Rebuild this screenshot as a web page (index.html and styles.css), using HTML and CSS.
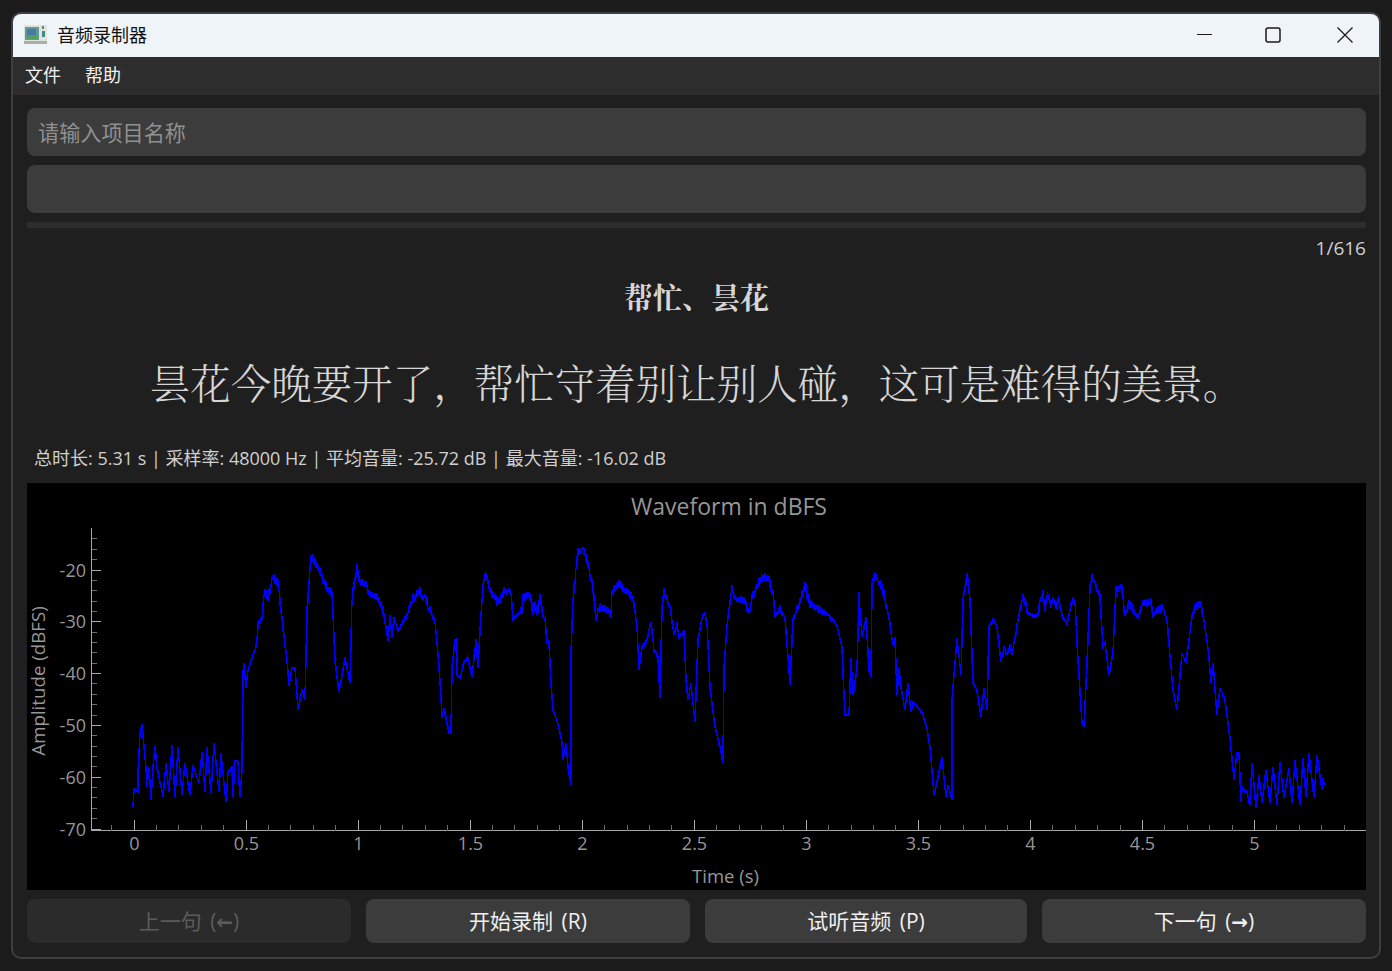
FILE: index.html
```html
<!DOCTYPE html>
<html lang="zh-CN">
<head>
  <meta charset="UTF-8">
  <meta name="viewport" content="width=device-width, initial-scale=1.0">
  <title>音频录制器</title>
  <link rel="stylesheet" href="styles.css">
</head>
<body>
  <div class="window">
    <header class="titlebar">
      <svg class="app-icon" width="24" height="22" viewBox="0 0 24 22">
        <rect x="0" y="1" width="23" height="19" fill="#dfe3dc"/>
        <rect x="1" y="3" width="14" height="13" fill="#5f9a94"/>
        <rect x="3" y="5" width="9" height="8" fill="#4a78a8"/>
        <rect x="4" y="11" width="9" height="4" fill="#55a060"/>
        <rect x="18" y="2" width="2" height="3" fill="#6c7f80"/>
        <rect x="18" y="7" width="3" height="6" fill="#3d8a86"/>
        <rect x="0" y="17" width="23" height="3" fill="#a9aea6"/>
      </svg>
      <span class="app-name">音频录制器</span>
      <div class="caption-buttons">
        <svg width="16" height="16" viewBox="0 0 16 16"><path d="M0 7.5H15" fill="none" stroke="#1a1a1a"/></svg>
        <svg width="16" height="16" viewBox="0 0 16 16"><rect x="1" y="1" width="14" height="14" rx="2" fill="none" stroke="#1a1a1a" stroke-width="1.5"/></svg>
        <svg width="16" height="16" viewBox="0 0 16 16"><path d="M.5 .5L15.5 15.5M15.5 .5L.5 15.5" fill="none" stroke="#1a1a1a" stroke-width="1.3"/></svg>
      </div>
    </header>

    <nav class="menubar">
      <span>文件</span>
      <span>帮助</span>
    </nav>

    <main class="content">
      <input class="field" type="text" placeholder="请输入项目名称">
      <div class="field"></div>
      <div class="progress"></div>
      <div class="counter">1/616</div>
      <div class="keywords">帮忙、昙花</div>
      <div class="sentence">昙花今晚要开了，帮忙守着别让别人碰，这可是难得的美景。</div>
      <div class="stats">总时长: 5.31 s | 采样率: 48000 Hz | 平均音量: -25.72 dB | 最大音量: -16.02 dB</div>

      <div class="plot">
        <svg id="chart" width="1339" height="407" viewBox="27 483 1339 407"></svg>
      </div>

      <div class="actions">
        <button disabled>上一句 (<span class="arrow">←</span>)</button>
        <button>开始录制 (R)</button>
        <button>试听音频 (P)</button>
        <button>下一句 (<span class="arrow">→</span>)</button>
      </div>
    </main>
  </div>

  <script src="chart.js"></script>
</body>
</html>
```

FILE: styles.css
```css
* {
  box-sizing: border-box;
}
body {
  margin: 0;
  padding: 12px 11px;
  background-color: #1b1b1b;
  font-family: "Open Sans", "Noto Sans CJK SC", sans-serif;
  color: #d8d8d8;
}
.window {
  height: 947px;
  display: flex;
  flex-direction: column;
  background-color: #1f1f1f;
  border: 2px solid #3e3e3e;
  border-radius: 10px;
  overflow: hidden;
}
.titlebar {
  height: 43px;
  flex: none;
  display: flex;
  align-items: center;
  padding-left: 11px;
  padding-bottom: 2px;
  background-color: #eff4f9;
  color: #111;
}
.app-icon {
  margin-right: 9px;
}
.app-name {
  margin-bottom: 2px;
  font-family: "Noto Sans CJK SC", sans-serif;
  font-size: 18px;
}
.caption-buttons {
  margin-left: auto;
  margin-right: 26px;
  display: flex;
}
.caption-buttons svg:nth-child(1) {
  margin-right: 52px;
}
.caption-buttons svg:nth-child(2) {
  margin-right: 56px;
}
.menubar {
  height: 38px;
  flex: none;
  display: flex;
  align-items: center;
  gap: 24px;
  padding-left: 12px;
  padding-bottom: 4px;
  background-color: #2d2d2d;
  color: #f2f2f2;
  font-family: "Noto Sans CJK SC", sans-serif;
  font-size: 18px;
}
.content {
  flex: 1;
  display: flex;
  flex-direction: column;
  padding: 13px 13px 14px 14px;
}
.field {
  height: 48px;
  flex: none;
  width: 100%;
  margin-bottom: 9px;
  padding: 0 11px 2px;
  border: none;
  border-radius: 8px;
  background-color: #3c3c3c;
  font-family: "Noto Sans CJK SC", sans-serif;
  font-size: 21.15px;
  color: #ddd;
}
.field::placeholder {
  color: #909090;
  opacity: 1;
}
.progress {
  height: 6px;
  flex: none;
  background-color: #2d2d2d;
}
.counter {
  height: 40px;
  flex: none;
  line-height: 40px;
  text-align: right;
  font-size: 19px;
  color: #d0d0d0;
}
.keywords {
  height: 58px;
  flex: none;
  line-height: 58px;
  text-align: center;
  font-family: "Noto Serif CJK SC", "Noto Sans CJK SC", serif;
  font-size: 29px;
  font-weight: bold;
  color: #d6d6d6;
}
.sentence {
  height: 112px;
  flex: none;
  line-height: 112px;
  text-align: center;
  font-family: "Noto Serif CJK SC", "Noto Sans CJK SC", serif;
  font-size: 40.5px;
  font-weight: 300;
  color: #d6d6d6;
}
.stats {
  height: 45px;
  flex: none;
  line-height: 40px;
  padding-left: 7px;
  white-space: nowrap;
  font-size: 18px;
  color: #d0d0d0;
}
.plot {
  height: 407px;
  flex: none;
  background-color: #000;
}
#chart {
  display: block;
  overflow: visible;
}
#chart text {
  font-family: "Open Sans", sans-serif;
  fill: #969696;
}
.actions {
  margin-top: 9px;
  height: 44px;
  flex: none;
  display: grid;
  grid-template-columns: 324px 324px 322px 324px;
  gap: 15px;
}
button {
  padding: 0 0 3px;
  border: none;
  border-radius: 8px;
  background-color: #3c3c3c;
  color: #f0f0f0;
  font-family: "Open Sans", "Noto Sans CJK SC", sans-serif;
  font-size: 21px;
  word-spacing: 3px;
  cursor: pointer;
}
button:disabled {
  background-color: #2b2b2b;
  color: #5c5c5c;
}
.arrow {
  font-family: "DejaVu Sans", sans-serif;
  font-size: 20px;
  line-height: 1;
  font-weight: bold;
}
```

FILE: chart.js
```js
const svgNS = 'http://www.w3.org/2000/svg';
const chart = document.getElementById('chart');

function add(tag, attrs, text) {
  const el = document.createElementNS(svgNS, tag);
  for (const key in attrs) el.setAttribute(key, attrs[key]);
  if (text) el.textContent = text;
  chart.appendChild(el);
  return el;
}

function line(x1, y1, x2, y2, color) {
  add('line', { x1, y1, x2, y2, stroke: color, 'stroke-width': 1, 'shape-rendering': 'crispEdges' });
}

// axes
const axisX = 91.5, axisY = 830.5;
const major = '#a8a8a8', minor = '#6e6e6e';
line(axisX, 528, axisX, 831, major);
line(axisX, axisY, 1366, axisY, major);

// y ticks, every 2 dB
for (let db = -70; db <= -14; db += 2) {
  const y = Math.round(569.5 + (-20 - db) * 5.18) + 0.5;
  const big = db % 10 === 0;
  if (big || db > -70) line(axisX, y, big ? 101 : 97, y, big ? major : minor);
  if (big) add('text', { x: 86, y: y + 6, 'text-anchor': 'end', 'font-size': 18 }, String(db));
}

// x ticks, every 0.1 s
for (let i = -1; i <= 54; i++) {
  const x = Math.round(133.5 + i * 22.41) + 0.5;
  const big = i % 5 === 0 && i >= 0;
  line(x, big ? 820 : 825, x, axisY, big ? major : minor);
  if (big) add('text', { x, y: 850, 'text-anchor': 'middle', 'font-size': 18 }, String(i / 10));
}

// titles
add('text', { x: 729, y: 515, 'text-anchor': 'middle', 'font-size': 23 }, 'Waveform in dBFS');
add('text', { x: 725.5, y: 883, 'text-anchor': 'middle', 'font-size': 18.5 }, 'Time (s)');
add('text', { x: 0, y: 0, 'text-anchor': 'middle', 'font-size': 18.7, transform: 'translate(44.5 681) rotate(-90)' }, 'Amplitude (dBFS)');

// waveform outline, traced in page pixels
const trace = [
  [133,807],[134,788],[138,792],[138,773],[140,733],[142,724],[144,747],[146,767],[147,787],[149,767],
  [151,800],[153,767],[155,746],[157,767],[163,797],[166,763],[169,792],[172,745],[175,797],[178,747],
  [182,795],[185,763],[190,795],[193,765],[199,783],[202,752],[205,792],[207,747],[211,793],[214,743],
  [219,792],[221,753],[226,802],[228,772],[232,767],[233,797],[235,760],[238,762],[240,797],[242,770],
  [243,673],[244,663],[246,688],[248,670],[257,643],[258,623],[262,620],[265,587],[268,598],[273,578],
  [278,583],[283,627],[287,660],[289,686],[292,668],[295,668],[298,710],[302,690],[305,700],[307,613],
  [311,555],[317,565],[328,590],[332,593],[335,660],[339,692],[345,658],[350,683],[352,597],[357,568],
  [360,583],[366,583],[368,595],[377,595],[383,610],[386,627],[388,642],[390,615],[392,638],[394,618],
  [398,632],[407,615],[413,598],[420,592],[427,603],[435,622],[438,653],[441,697],[442,718],[444,708],
  [449,733],[451,733],[452,667],[455,640],[457,640],[457,675],[460,678],[464,662],[468,658],[472,677],
  [476,640],[478,668],[481,613],[483,587],[486,573],[491,592],[497,603],[505,590],[511,593],[513,620],
  [522,610],[523,598],[527,594],[531,597],[533,615],[535,600],[537,615],[540,598],[543,617],[545,618],
  [547,643],[549,643],[551,683],[553,710],[557,720],[562,742],[563,760],[566,743],[568,767],[571,785],
  [571,653],[573,600],[576,570],[578,552],[584,550],[590,572],[594,593],[596,622],[598,608],[608,610],
  [611,618],[612,593],[619,583],[633,598],[637,627],[639,670],[642,647],[647,640],[651,622],[654,650],
  [658,657],[660,698],[662,607],[664,590],[670,607],[674,635],[677,623],[679,638],[684,630],[686,680],
  [688,700],[691,683],[695,722],[698,640],[702,618],[705,613],[707,623],[710,687],[715,727],[720,747],
  [723,763],[724,667],[727,627],[730,600],[732,588],[735,600],[745,600],[749,613],[752,597],[757,585],
  [763,577],[768,578],[773,592],[775,617],[780,608],[785,618],[788,657],[790,685],[793,620],[798,608],
  [805,585],[810,605],[827,613],[837,625],[842,647],[843,673],[845,715],[849,715],[851,658],[853,695],
  [857,670],[859,595],[862,637],[866,618],[869,670],[871,677],[872,583],[874,575],[883,590],[890,623],
  [893,645],[895,637],[897,695],[899,668],[901,687],[905,710],[908,683],[911,712],[913,702],[922,712],
  [927,728],[930,747],[934,795],[938,777],[942,757],[946,797],[948,785],[952,800],[952,700],[955,663],
  [957,638],[961,675],[963,600],[967,575],[970,600],[973,683],[977,690],[981,717],[984,688],[987,710],
  [989,627],[993,619],[997,627],[1001,662],[1004,647],[1007,655],[1010,645],[1012,655],[1018,620],[1023,597],
  [1028,613],[1037,617],[1043,592],[1045,608],[1048,593],[1051,607],[1053,597],[1057,608],[1058,597],[1062,615],
  [1067,625],[1072,600],[1075,603],[1078,660],[1082,723],[1084,727],[1087,663],[1090,587],[1092,578],[1100,595],
  [1103,648],[1105,642],[1109,675],[1113,653],[1116,590],[1122,588],[1125,615],[1129,603],[1138,618],[1143,602],
  [1151,603],[1153,618],[1156,611],[1163,608],[1167,620],[1173,690],[1177,710],[1182,653],[1186,662],[1192,617],
  [1195,607],[1201,603],[1205,628],[1208,648],[1211,683],[1213,663],[1217,715],[1220,688],[1225,700],[1230,738],
  [1234,780],[1237,753],[1239,753],[1241,802],[1242,788],[1247,792],[1250,805],[1252,763],[1256,808],[1259,775],
  [1262,803],[1266,770],[1270,803],[1273,767],[1277,805],[1280,762],[1284,798],[1289,768],[1292,803],[1295,760],
  [1300,805],[1303,758],[1306,797],[1309,753],[1314,798],[1317,755],[1322,790],[1323,778],[1325,788]
];

// small repeatable noise, stronger on the loud plateaus
let seed = 7;
function noise() {
  seed = (seed * 16807) % 2147483647;
  return seed / 2147483647 - 0.5;
}

const points = [];
for (let i = 0; i < trace.length - 1; i++) {
  const [x0, y0] = trace[i];
  const [x1, y1] = trace[i + 1];
  const steps = Math.max(1, Math.round((x1 - x0) * 3));
  for (let s = 0; s < steps; s++) {
    const t = s / steps;
    const y = y0 + (y1 - y0) * t;
    const amp = y < 612 ? 9 : y < 660 ? 3 : 1;
    points.push((x0 + (x1 - x0) * t).toFixed(1) + ',' + Math.round(y + noise() * amp));
  }
}
add('polyline', {
  points: points.join(' '),
  fill: 'none',
  stroke: '#0000ff',
  'stroke-width': 1.5,
  'shape-rendering': 'crispEdges'
});
```
